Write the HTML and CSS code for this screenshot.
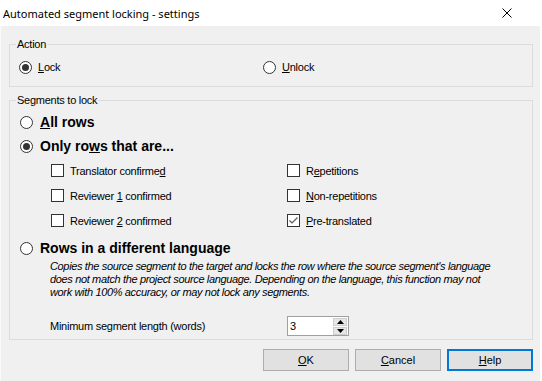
FILE: index.html
```html
<!DOCTYPE html>
<html lang="en">
<head>
  <meta charset="UTF-8">
  <title>Automated segment locking - settings</title>
  <link rel="stylesheet" href="styles.css">
</head>
<body>
  <div class="window">
    <div class="titlebar">
      <span class="title">Automated segment locking - settings</span>
      <svg class="close" width="10" height="10" viewBox="0 0 10 10"><path d="M0.5 0.5 L9.5 9.5 M9.5 0.5 L0.5 9.5" stroke="#000" stroke-width="1"/></svg>
    </div>

    <div class="content">
      <fieldset class="group action">
        <legend>Action</legend>
        <div class="two-col">
          <div class="opt"><span class="radio on"></span><span><u>L</u>ock</span></div>
          <div class="opt"><span class="radio"></span><span><u>U</u>nlock</span></div>
        </div>
      </fieldset>

      <fieldset class="group segments">
        <legend>Segments to lock</legend>
        <div class="big-opt"><span class="radio"></span><span><u>A</u>ll rows</span></div>
        <div class="big-opt"><span class="radio on"></span><span>Only ro<u>w</u>s that are...</span></div>

        <div class="checks">
          <div class="opt"><span class="check"></span><span>Translator confirme<u>d</u></span></div>
          <div class="opt"><span class="check"></span><span>R<u>e</u>petitions</span></div>
          <div class="opt"><span class="check"></span><span>Reviewer <u>1</u> confirmed</span></div>
          <div class="opt"><span class="check"></span><span><u>N</u>on-repetitions</span></div>
          <div class="opt"><span class="check"></span><span>Reviewer <u>2</u> confirmed</span></div>
          <div class="opt"><span class="check"><svg width="11" height="11" viewBox="0 0 11 11"><path d="M1.5 5.5 L4 8 L9.5 2.5" fill="none" stroke="#5a5a5a" stroke-width="1.2"/></svg></span><span><u>P</u>re-translated</span></div>
        </div>

        <div class="big-opt lang"><span class="radio"></span><span>Rows in a different language</span></div>
        <p class="note">Copies the source segment to the target and locks the row where the source segment's language<br>does not match the project source language. Depending on the language, this function may not<br>work with 100% accuracy, or may not lock any segments.</p>

        <div class="min-row">
          <span class="min-label">Minimum segment length (words)</span>
          <div class="spin">
            <span class="spin-value">3</span>
            <div class="spin-btns">
              <span class="spin-btn"><svg width="7" height="4" viewBox="0 0 7 4"><path d="M3.5 0 L7 4 L0 4 Z" fill="#000"/></svg></span>
              <span class="spin-btn"><svg width="7" height="4" viewBox="0 0 7 4"><path d="M0 0 L7 0 L3.5 4 Z" fill="#000"/></svg></span>
            </div>
          </div>
        </div>
      </fieldset>

      <div class="buttons">
        <button class="btn"><u>O</u>K</button>
        <button class="btn"><u>C</u>ancel</button>
        <button class="btn default"><u>H</u>elp</button>
      </div>
    </div>
  </div>
</body>
</html>
```

FILE: styles.css
```css
body {
  margin: 0;
  background: #f0f0f0;
  font-family: 'Liberation Sans', Arial, sans-serif;
  font-size: 11px;
  letter-spacing: -0.25px;
  color: #000;
}

.window {
  width: 539px;
  height: 381px;
  border-left: 1px solid #fafafa;
  border-right: 2px solid #fff;
  background: #f0f0f0;
}

.titlebar {
  height: 26px;
  background: #fff;
  display: flex;
  align-items: center;
  justify-content: space-between;
  padding: 0 30px 0 3px;
  margin-left: -1px;
  margin-right: -2px;
}

.title {
  font-family: 'Noto Sans', sans-serif;
  font-size: 11px;
  letter-spacing: 0;
}

.content {
  padding: 12px 7px 0 8px;
}

.group {
  margin: 0;
  border: 1px solid #dcdcdc;
  padding: 0 8px;
  min-inline-size: 0;
}

.group legend {
  margin-left: -2px;
  padding: 0 1px;
  line-height: 13px;
}

.action {
  padding-top: 6px;
  padding-bottom: 9px;
}

.segments {
  margin-top: 7px;
  padding-top: 3px;
  padding-bottom: 3px;
}

.two-col {
  display: grid;
  grid-template-columns: 244px 1fr;
  padding-left: 1px;
}

.opt {
  display: flex;
  align-items: center;
  gap: 6px;
  height: 20px;
}

.radio {
  width: 11px;
  height: 11px;
  border: 1px solid #333;
  border-radius: 50%;
  background: #fff;
  display: flex;
  align-items: center;
  justify-content: center;
  flex: none;
}

.radio.on::after {
  content: "";
  width: 7px;
  height: 7px;
  border-radius: 50%;
  background: #333;
}

.check {
  width: 11px;
  height: 11px;
  border: 1px solid #333;
  background: #fff;
  display: flex;
  align-items: center;
  justify-content: center;
  flex: none;
}

.big-opt {
  display: flex;
  align-items: center;
  gap: 7px;
  height: 24px;
  padding-left: 2px;
  font-size: 14px;
  font-weight: bold;
  letter-spacing: 0;
}

.checks {
  display: grid;
  grid-template-columns: 236px 1fr;
  grid-auto-rows: 25px;
  padding-left: 33px;
}

.checks .opt {
  height: 25px;
}

.lang {
  margin-top: 3px;
}

.note {
  margin: 0 0 0 32px;
  font-style: italic;
  line-height: 13px;
  letter-spacing: -0.35px;
  white-space: nowrap;
}

.min-row {
  display: flex;
  align-items: center;
  margin-top: 17px;
  padding-left: 32px;
  height: 20px;
}

.min-label {
  width: 237px;
}

.spin {
  width: 60px;
  height: 18px;
  border: 1px solid #a0a0a0;
  background: #fff;
  display: flex;
  justify-content: space-between;
}

.spin-value {
  padding-left: 2px;
  line-height: 18px;
}

.spin-btns {
  display: flex;
  flex-direction: column;
  gap: 1px;
  padding: 1px 1px 0 0;
}

.spin-btn {
  width: 14px;
  height: 8px;
  background: #e6e6e6;
  border: 1px solid #cfcfcf;
  box-sizing: border-box;
  display: flex;
  align-items: center;
  justify-content: center;
}

.buttons {
  display: flex;
  justify-content: flex-end;
  gap: 6px;
  margin-top: 9px;
}

.btn {
  width: 86px;
  height: 22px;
  background: #e1e1e1;
  border: 1px solid #adadad;
  font-family: 'Liberation Sans', Arial, sans-serif;
  font-size: 11px;
  color: #000;
  padding: 0;
}

.btn.default {
  border: 2px solid #0078d7;
}
```
